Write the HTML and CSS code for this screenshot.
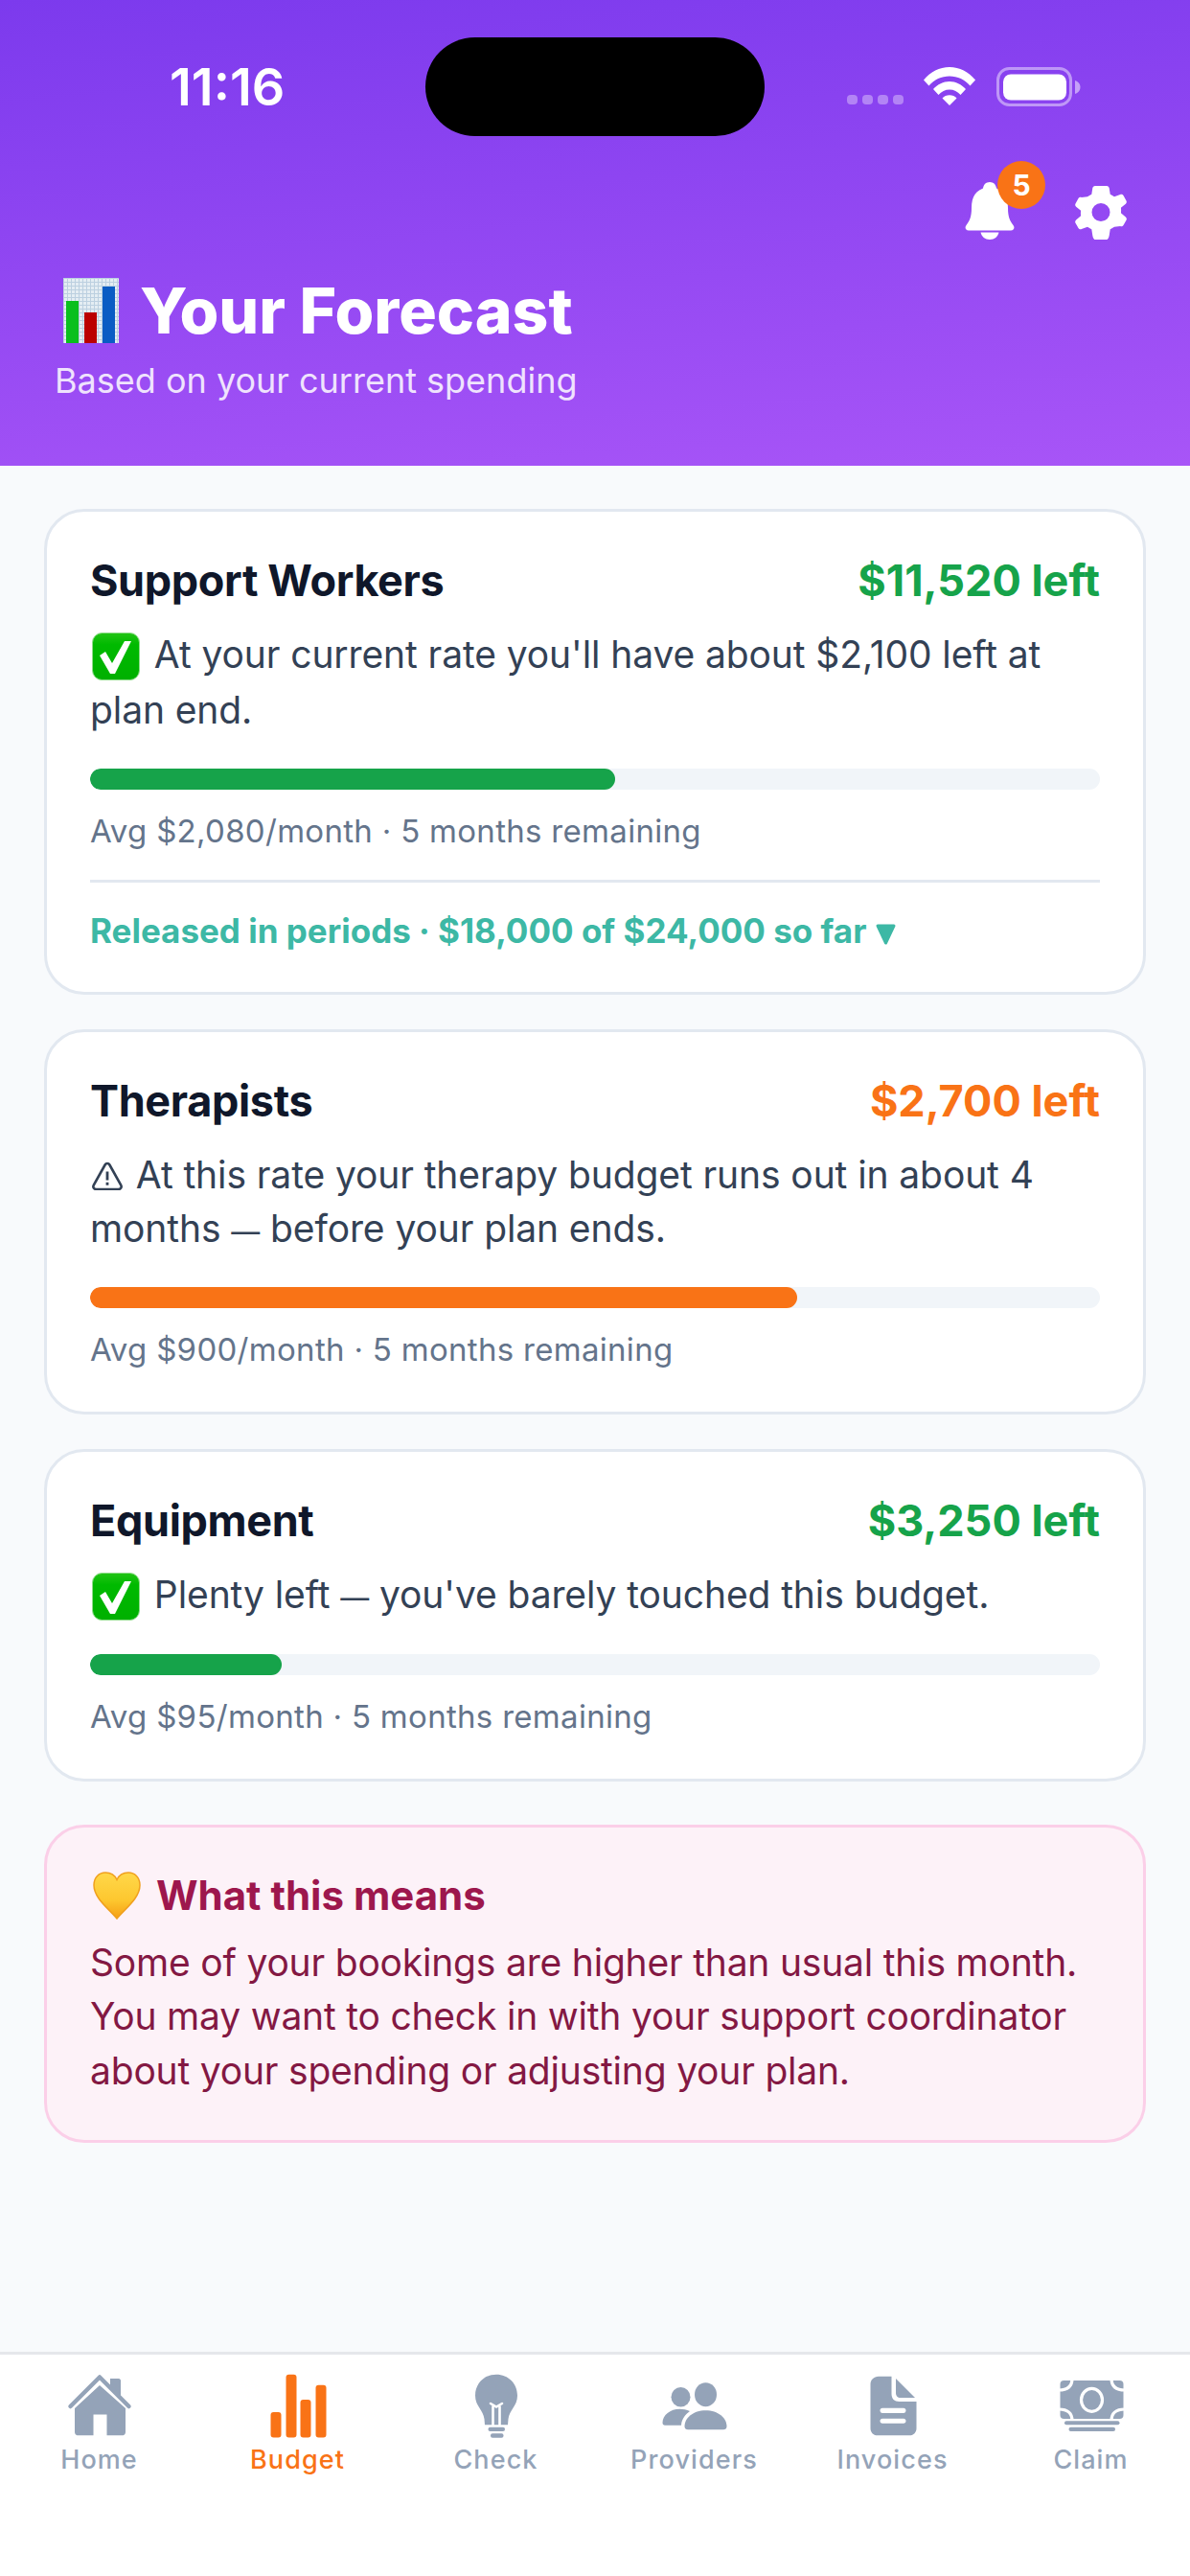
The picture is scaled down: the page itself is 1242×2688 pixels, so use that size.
FILE: index.html
```html
<!DOCTYPE html>
<html lang="en">
<head>
<meta charset="utf-8">
<title>Your Forecast</title>
<link rel="stylesheet" href="styles.css">
</head>
<body>
<div class="app">
  <header class="hero">
    <div class="island"></div>
    <div class="status">
      <span class="time">11:16</span>
      <div class="status-icons">
        <div class="dots"><i></i><i></i><i></i><i></i></div>
        <svg class="wifi" viewBox="0 0 54 40"><path d="M0 13.500C7 5 16.500 0 27 0s20 5 27 13.500l-5.500 6C43 13 35.500 9.500 27 9.500S11 13 5.500 19.500Z"/><path d="M10 23C14.500 18 20.500 15 27 15s12.500 3 17 8l-5.500 6C35.500 25.500 31.500 23.500 27 23.500S18.500 25.500 15.500 29Z"/><path d="M19.500 32.500C21.500 30.500 24 29.300 27 29.300s5.500 1.200 7.500 3.200L27 40Z"/></svg>
        <svg class="battery" viewBox="0 0 88 42"><rect x="1.500" y="1.500" width="76" height="38" rx="12" class="batt-line"/><rect x="7" y="7.500" width="66" height="27" rx="8" fill="#fff"/><path d="M82 14c3 .8 5.500 3.500 5.500 7s-2.500 6.200-5.500 7Z" fill="#fff" opacity=".5"/></svg>
      </div>
    </div>
    <div class="actions">
      <div class="bell-wrap">
        <svg class="bell" viewBox="0 0 52 60"><path d="M26 0c4 0 6.500 2.800 7 6.500C42 10 45 17.500 45 27c0 9 2 13.500 5.500 18 1.800 2.500 1 5.500-2.500 5.500H4c-3.500 0-4.300-3-2.500-5.500C5 40.500 7 36 7 27 7 17.500 10 10 19 6.500 19.500 2.800 22 0 26 0Z"/><path d="M16.500 52.500h19C34.500 57 31 60 26 60s-8.500-3-9.500-7.500Z"/></svg>
        <span class="badge">5</span>
      </div>
      <svg class="gear" viewBox="0 0 54 56"><path fill-rule="evenodd" d="M21 0h12c1.500 0 2.500 1 2.700 2.300l1 6.500c1.500.7 3 1.500 4.300 2.500l6.200-2.300c1.300-.5 2.600 0 3.300 1.100l3 5.300c.6 1.100.4 2.500-.6 3.300l-5 4.100c.1.900.2 1.700.2 2.700s-.1 1.900-.2 2.800l5 4.100c1 .8 1.200 2.200.6 3.300l-3 5.300c-.7 1.100-2 1.600-3.300 1.100L41 42.800c-1.300 1-2.800 1.800-4.300 2.500l-1 6.400C35.500 53 34.500 56 33 56H21c-1.500 0-2.500-3-2.700-4.300l-1-6.400c-1.500-.7-3-1.500-4.300-2.500l-6.200 2.300c-1.300.5-2.600 0-3.300-1.100l-3-5.300c-.6-1.100-.4-2.500.6-3.300l5-4.100c-.1-.9-.2-1.800-.2-2.800s.1-1.800.2-2.700l-5-4.100c-1-.8-1.200-2.200-.6-3.300l3-5.300c.7-1.100 2-1.600 3.300-1.100L13 11.300c1.300-1 2.800-1.800 4.300-2.500l1-6.500C18.500 1 19.500 0 21 0ZM27 18a9.500 9.500 0 1 0 0 19 9.500 9.500 0 0 0 0-19Z"/></svg>
    </div>
    <h1 class="title">
      <svg class="emoji-chart" viewBox="0 0 58 68"><defs><pattern id="grid" width="4" height="4" patternUnits="userSpaceOnUse"><rect width="4" height="4" fill="#e4edf3"/><path d="M0 .5h4M.5 0v4" stroke="#bcd0e0" stroke-width="1"/></pattern></defs><rect width="58" height="68" fill="url(#grid)"/><rect x="3" y="24" width="13" height="44" fill="#0abf1e"/><rect x="22" y="36" width="13" height="32" fill="#bb0000"/><rect x="41" y="9" width="13" height="59" fill="#0a5cc4"/></svg>
      <span>Your Forecast</span>
    </h1>
    <p class="sub">Based on your current spending</p>
  </header>

  <main class="content">
    <section class="card">
      <div class="row"><h2>Support Workers</h2><span class="left green">$11,520 left</span></div>
      <p class="msg"><svg class="emoji-check" viewBox="0 0 50 50"><use href="#check"/></svg> At your current rate you'll have about $2,100 left at plan end.</p>
      <div class="track"><div class="fill bg-green" style="width:52%"></div></div>
      <p class="stat">Avg $2,080/month · 5 months remaining</p>
      <div class="released">Released in periods · $18,000 of $24,000 so far <svg class="tri" viewBox="0 0 21 22"><path d="M2 2h17l-8.500 18Z" fill="#3db8a5" stroke="#3db8a5" stroke-width="3" stroke-linejoin="round"/></svg></div>
    </section>
    <section class="card">
      <div class="row"><h2>Therapists</h2><span class="left orange">$2,700 left</span></div>
      <p class="msg"><svg class="emoji-warn" viewBox="0 0 32 30"><path d="M13.600 3.500 1.800 24.600C.6 26.800 2 29 4.500 29h23c2.500 0 3.900-2.200 2.700-4.400L18.400 3.500c-1.100-2-3.700-2-4.800 0Z" fill="none" stroke="#334155" stroke-width="2.600" stroke-linejoin="round"/><path d="M16 10.500v9M16 21.800v3" stroke="#334155" stroke-width="2.800"/></svg> At this rate your therapy budget runs out in about 4<br>months <span class="dash">—</span> before your plan ends.</p>
      <div class="track"><div class="fill bg-orange" style="width:70%"></div></div>
      <p class="stat">Avg $900/month · 5 months remaining</p>
    </section>
    <section class="card">
      <div class="row"><h2>Equipment</h2><span class="left green">$3,250 left</span></div>
      <p class="msg"><svg class="emoji-check" viewBox="0 0 50 50"><use href="#check"/></svg> Plenty left <span class="dash">—</span> you've barely touched this budget.</p>
      <div class="track"><div class="fill bg-green" style="width:19%"></div></div>
      <p class="stat">Avg $95/month · 5 months remaining</p>
    </section>
    <section class="note">
      <h3><svg class="emoji-heart" viewBox="0 0 50 50"><defs><linearGradient id="hg" x1="0" y1="0" x2="0" y2="1"><stop offset="0" stop-color="#ffd84a"/><stop offset=".6" stop-color="#fdc72f"/><stop offset="1" stop-color="#f59f14"/></linearGradient></defs><path d="M25 49C17 39 1 28 1 14 1 6 6.500 1 13 1c5.500 0 10 3 12 7.500C27 4 31.500 1 37 1c6.500 0 12 5 12 13 0 14-16 25-24 35Z" fill="url(#hg)" stroke="#f0a01e" stroke-width="1.500"/></svg> What this means</h3>
      <p>Some of your bookings are higher than usual this month. You may want to check in with your support coordinator about your spending or adjusting your plan.</p>
    </section>
  </main>

  <nav class="tabs">
    <div class="tab">
      <svg viewBox="0 0 84 72"><path d="M53 6h9c1 0 2 1 2 2v18l-11-12Z"/><path d="M11.500 35 42 4.500 72.500 35" fill="none" stroke-width="4.500" stroke-linecap="round" stroke-linejoin="round" class="stroked"/><path d="M42 13 69 37v25c0 2-1.500 3.300-3.500 3.300h-16V43.500h-14v21.800h-16c-2 0-3.500-1.300-3.500-3.300V37Z"/></svg>
      <span>Home</span>
    </div>
    <div class="tab active">
      <svg viewBox="0 0 84 72"><rect x="13.500" y="41" width="11" height="26.500" rx="3"/><rect x="29.500" y="1.700" width="11" height="65.800" rx="3"/><rect x="44.500" y="28" width="11" height="39.500" rx="3"/><rect x="60.500" y="12.700" width="11" height="54.800" rx="3"/></svg>
      <span>Budget</span>
    </div>
    <div class="tab">
      <svg viewBox="0 0 84 72"><path d="M42 1.700c12.500 0 22 9.500 22 22 0 11-8.500 15-9.500 24.500l-.5 6H30l-.5-6C28.500 38.700 20 34.700 20 23.700c0-12.500 9.500-22 22-22Z"/><path d="M36 32l6 3.500L48 32M38.500 35v19M45.500 35v19" fill="none" stroke="#fff" stroke-width="2.600" stroke-linecap="round"/><rect x="33.500" y="56.700" width="17.500" height="4.300" rx="2"/><rect x="36" y="63.300" width="13.500" height="4.400" rx="2"/></svg>
      <span>Check</span>
    </div>
    <div class="tab">
      <svg viewBox="0 0 84 72"><ellipse cx="53.500" cy="22.700" rx="11.500" ry="12.500"/><ellipse cx="27.500" cy="25.200" rx="10" ry="10.200"/><path d="M31.500 56c0-9 9-16.700 22-16.700s22 7.700 22 16.700c0 2-1.500 3.300-3.500 3.300H35c-2 0-3.500-1.300-3.500-3.300Z"/><path d="M8.500 52c0-8 8-14.300 18-14.300 3.500 0 7 .8 10.500 2.300-4 3-8.500 7.500-9 14.700H11c-1.500 0-2.500-1-2.500-2.700Z"/></svg>
      <span>Providers</span>
    </div>
    <div class="tab">
      <svg viewBox="0 0 84 72"><path fill-rule="evenodd" d="M27 3.700h13.500V22c0 5 3 8 8 8h18v28c0 4-3 7.300-7 7.300H25.500c-4 0-7-3.300-7-7.300V12c0-4.700 3.500-8.300 8.500-8.300ZM31 36.700c-1.500 0-2.500 1.200-2.500 2.600s1 2.700 2.500 2.700h22c1.500 0 2.500-1.200 2.500-2.700s-1-2.600-2.500-2.600ZM31 47.700c-1.500 0-2.500 1.100-2.500 2.500s1 2.500 2.500 2.500h22c1.500 0 2.500-1.100 2.500-2.500s-1-2.500-2.500-2.500Z"/><path d="M45 6v15c0 3 2 5 4.500 5H65Z"/></svg>
      <span>Invoices</span>
    </div>
    <div class="tab">
      <svg viewBox="0 0 84 72"><rect x="9.500" y="8" width="66" height="40" rx="4"/><g fill="none" stroke="#fff" stroke-width="3.200"><ellipse cx="42.500" cy="28.300" rx="11" ry="12"/><path d="M22 6c0 8-5 12-14 12M63 6c0 8 5 12 14 12M22 50c0-8-5-12-14-12M63 50c0-8 5-12 14-12"/></g><rect x="14" y="50.300" width="57.500" height="4" rx="2"/><rect x="18.500" y="56.700" width="48.500" height="4.300" rx="2"/></svg>
      <span>Claim</span>
    </div>
  </nav>
</div>
<svg class="defs" width="0" height="0"><defs><linearGradient id="cg" x1="0" y1="0" x2="0" y2="1"><stop offset="0" stop-color="#22c415"/><stop offset=".25" stop-color="#00ba00"/><stop offset="1" stop-color="#00b000"/></linearGradient><g id="check"><rect x=".5" y=".5" width="49" height="49" rx="10" fill="url(#cg)" stroke="#8fdc8a" stroke-width="1"/><path d="M8 24l6-4 7 12L34 9h7L24 43h-5Z" fill="#fff"/></g></defs></svg>
</body>
</html>
```

FILE: styles.css
```css
* { box-sizing: border-box; }
html, body { margin: 0; padding: 0; }
body { width: 1242px; height: 2688px; background: #f8fafc; font-family: Inter, "Noto Sans", sans-serif; overflow: hidden; }
h1, h2, h3, p { margin: 0; }
.defs { position: absolute; }

.app { width: 1242px; height: 2688px; display: flex; flex-direction: column; }

.hero { position: relative; height: 486px; background: linear-gradient(175deg, #7c3aed 0%, #a855f7 100%); padding: 0 57px; color: #fff; }
.island { position: absolute; left: 444px; top: 39px; width: 354px; height: 103px; border-radius: 52px; background: #000; }
.status { height: 174px; display: flex; justify-content: space-between; padding: 64px 114px 0 177px; margin: 0 -57px; }
.time { font-size: 54px; line-height: 54px; font-weight: 600; }
.status-icons { display: flex; align-items: flex-start; padding-top: 6px; }
.dots { display: flex; gap: 5px; margin: 29px 21px 0 0; }
.dots i { width: 11px; height: 10px; border-radius: 4px; background: rgba(255,255,255,.35); }
.wifi { width: 54px; height: 40px; fill: #fff; margin-right: 22px; }
.battery { width: 88px; height: 42px; }
.batt-line { fill: none; stroke: rgba(255,255,255,.45); stroke-width: 3; }

.actions { display: flex; justify-content: flex-end; align-items: flex-end; gap: 63px; height: 76px; margin-right: 9px; }
.bell-wrap { position: relative; width: 52px; height: 60px; }
.bell { display: block; width: 52px; height: 60px; fill: #fff; }
.badge { position: absolute; left: 34px; top: -22px; width: 50px; height: 50px; border-radius: 50%; background: #f97316; color: #fff; font-size: 30px; line-height: 50px; font-weight: 700; text-align: center; }
.gear { width: 54px; height: 56px; fill: #fff; }

.title { display: flex; align-items: center; gap: 22px; margin: 40px 0 0 9px; font-size: 66px; line-height: 67px; font-weight: 800; }
.emoji-chart { width: 58px; height: 68px; flex: none; }
.sub { margin-top: 17px; font-size: 36px; line-height: 44px; color: rgba(255,255,255,.85); }

.content { flex: 1; padding: 45px 46px 0; display: flex; flex-direction: column; gap: 36px; }
.card { background: #fff; border: 3px solid #e2e8f0; border-radius: 42px; padding: 45px 45px 42px; }
.row { display: flex; justify-content: space-between; align-items: center; height: 54px; }
h2 { font-size: 45px; line-height: 54px; font-weight: 700; letter-spacing: -.35px; color: #0f172a; }
.left { font-size: 45px; line-height: 54px; font-weight: 700; }
.green { color: #16a34a; }
.orange { color: #f97316; }
.msg { margin-top: 22px; font-size: 39px; line-height: 56.5px; letter-spacing: -.1px; color: #334155; }
.dash { font-size: 30px; line-height: 0; }
.emoji-check { width: 50px; height: 50px; margin: 0 4px 3px 2px; vertical-align: -16px; }
.emoji-warn { width: 32px; height: 30px; margin: 0 3px 0 2px; vertical-align: -2px; }
.track { height: 22px; margin-top: 32px; border-radius: 11px; background: #f1f5f9; overflow: hidden; }
.fill { height: 100%; border-radius: 11px; }
.bg-green { background: #16a34a; }
.bg-orange { background: #f97316; }
.stat { margin-top: 20px; font-size: 33px; line-height: 46px; letter-spacing: .3px; color: #64748b; }
.released { margin-top: 28px; padding-top: 28px; border-top: 3px solid #e2e8f0; font-size: 35px; line-height: 44px; font-weight: 700; color: #3db8a5; }
.tri { width: 21px; height: 22px; margin-left: 1px; vertical-align: -2px; }

.note { margin-top: 9px; background: #fdf2f8; border: 3px solid #fbcfe8; border-radius: 42px; padding: 45px 45px 44px; }
h3 { display: flex; align-items: center; gap: 16px; font-size: 42px; line-height: 52px; font-weight: 700; color: #9d174d; }
.emoji-heart { width: 50px; height: 50px; flex: none; margin-left: 3px; }
.note p { margin-top: 16px; font-size: 39px; line-height: 56.5px; letter-spacing: -.2px; color: #831843; }

.tabs { height: 234px; background: #fff; border-top: 3px solid #e5e7eb; display: grid; grid-template-columns: repeat(6, 1fr); padding-top: 19px; }
.tab { display: flex; flex-direction: column; align-items: center; color: #94a3b8; }
.tab svg { width: 84px; height: 72px; fill: #94a3b8; }
.tab .stroked { stroke: #94a3b8; }
.tab span { margin-top: 1px; font-size: 27px; line-height: 36px; font-weight: 500; letter-spacing: 1.1px; }
.tab.active { color: #f97316; }
.tab.active svg { fill: #f97316; }
```
